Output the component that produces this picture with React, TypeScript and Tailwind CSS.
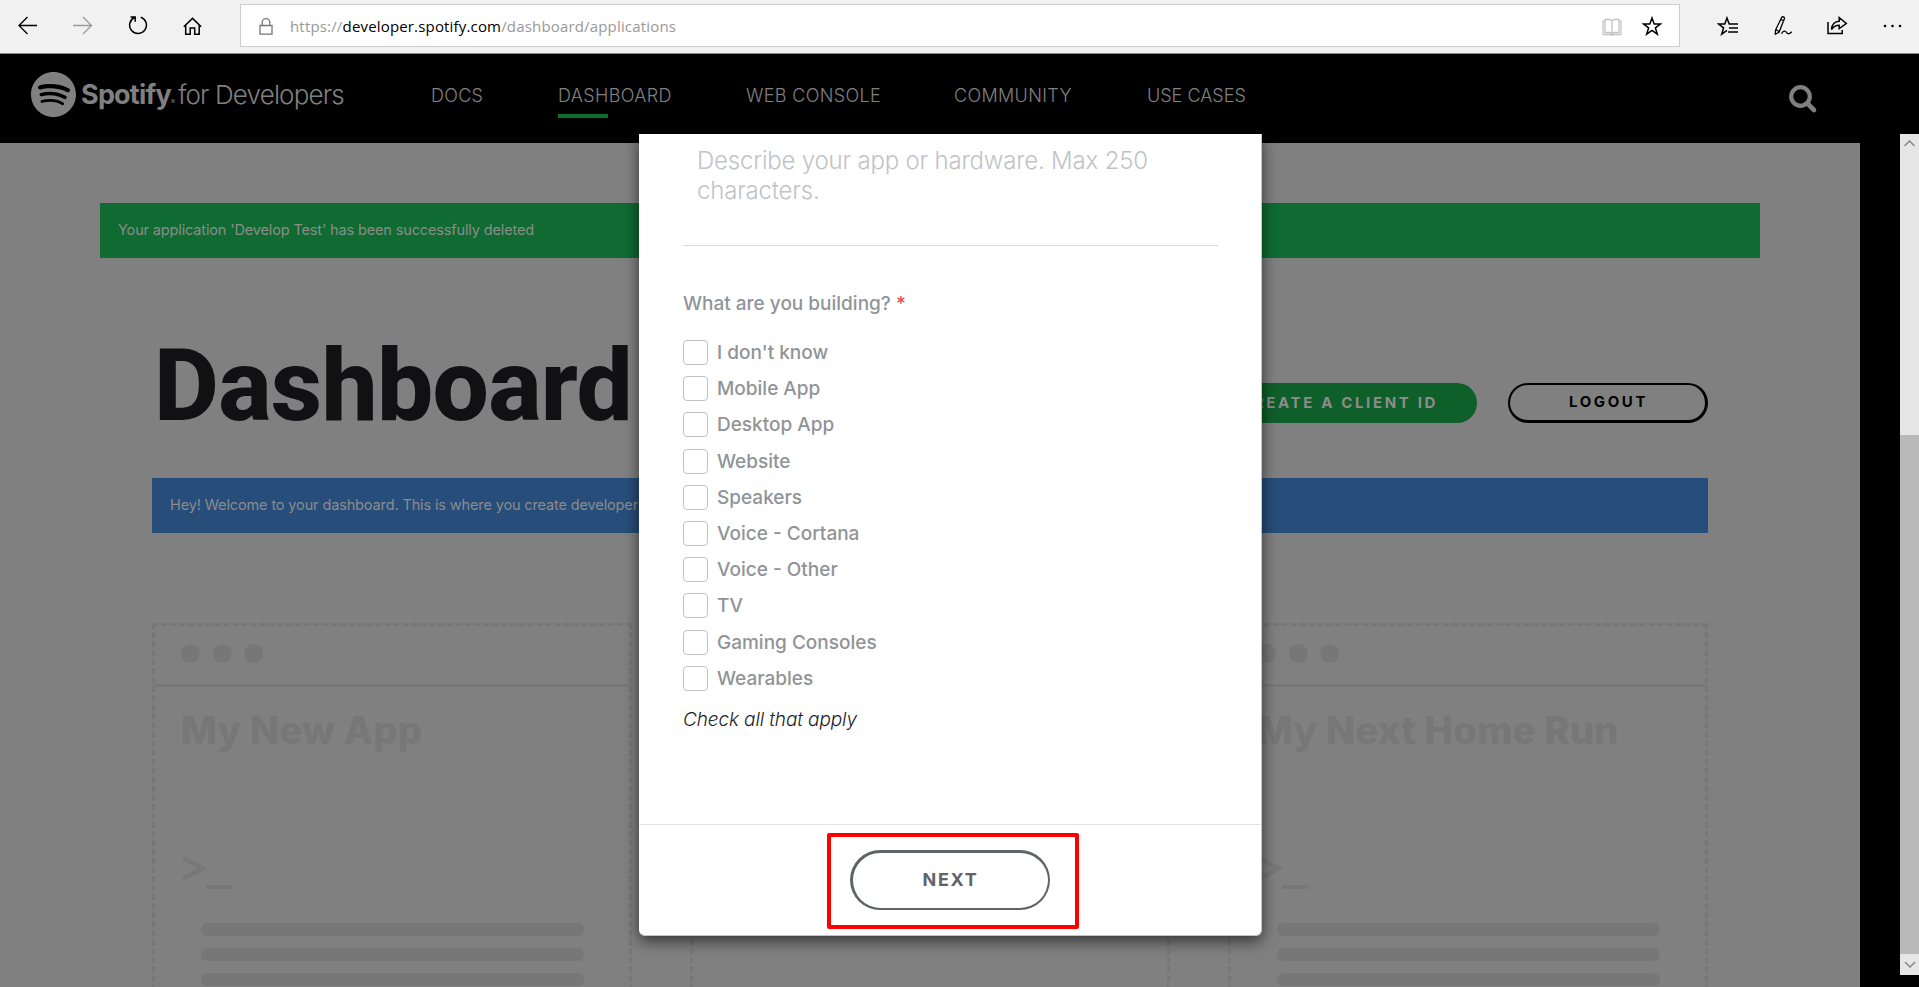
import type { ReactNode } from 'react';
import { SiSpotify } from 'react-icons/si';

const options = [
  "I don't know",
  'Mobile App',
  'Desktop App',
  'Website',
  'Speakers',
  'Voice - Cortana',
  'Voice - Other',
  'TV',
  'Gaming Consoles',
  'Wearables',
];

function Icon({ className, width, height, children }: { className: string; width: number; height: number; children: ReactNode }) {
  return (
    <svg
      className={`shrink-0 ${className}`}
      width={width}
      height={height}
      viewBox={`0 0 ${width} ${height}`}
      fill="none"
      stroke="currentColor"
      strokeWidth="1.3"
    >
      {children}
    </svg>
  );
}

function BrowserBar() {
  return (
    <div className="flex h-[54px] shrink-0 items-start border-b border-[#8a8a8a] bg-[#f1f1f1] text-black">
      <Icon className="mt-4 ml-[18px]" width={20} height={20}>
        <path d="M19 9.5H1M9.5 1 1 9.5 9.5 18" />
      </Icon>
      <Icon className="mt-4 ml-[35px] text-[#9a9a9a]" width={20} height={20}>
        <path d="M0 9.5h18.5M10 1l8.500 8.500L10 18" />
      </Icon>
      <Icon className="mt-[15px] ml-[35px]" width={20} height={20}>
        <path d="M12.800 2.200A8.400 8.400 0 1 1 6.500 2.500M2.500 2H7.200V6.800" strokeWidth="1.5" />
      </Icon>
      <Icon className="mt-[17px] ml-[35px]" width={19} height={19}>
        <path d="M.8 9.800 9.500 1.400l8.700 8.400M2.700 8.500V17.300H7.200V11H11.700V17.300H16.200V8.500" strokeWidth="1.5" />
      </Icon>
      <div className="mt-1 ml-[38px] flex h-[43px] w-[1440px] items-start border border-[#cdcdcd] bg-white">
        <Icon className="mt-[13px] ml-[18px] text-[#767676]" width={14} height={17}>
          <path d="M1 7.500H13V16.200H1ZM3.200 7.500V4.500a3.800 3.800 0 0 1 7.600 0V7.500" />
        </Icon>
        <p className="mt-[11px] ml-[17px] font-['Open_Sans',sans-serif] text-[15px] leading-5 tracking-[0.17px] text-[#999]">
          https://<span className="text-black">developer.spotify.com</span>/dashboard/applications
        </p>
        <div className="flex-1" />
        <Icon className="mt-[13px] text-[#c4c4c4]" width={20} height={18}>
          <path d="M3 1.500H8L10 2.800 12 1.500H17V14.500H12L10 15.800 8 14.500H3ZM10 2.800V15.800M3 3.200H1V16.500H8.500L10 17.200 11.500 16.500H19V3.200H17" />
        </Icon>
        <Icon className="mt-[11px] mr-[17px] ml-5" width={20} height={20}>
          <path d="M10 2l2.200 6h6.100l-4.900 3.800 1.900 6.400L10 14.400l-5.300 3.800 1.900-6.400L1.700 8h6.100z" strokeWidth="1.500" />
        </Icon>
      </div>
      <Icon className="mt-4 ml-[37px]" width={22} height={20}>
        <path d="M21 8H12.200L10 2 7.800 8H1.700l4.900 3.800-1.900 6.400L10 14.400M12 12h9M11 16h10" strokeWidth="1.500" />
      </Icon>
      <Icon className="mt-[15px] ml-[34px]" width={22} height={21}>
        <path d="M8.500 2.800C9.500 1 12 1.600 11.300 4L6 17.200 2.300 19.200 2.600 14.800ZM7.800 4.500 11 5.800M3 14.500l3.200 2.200M8.500 18.800c2-3.600 4-3 5.200-1.200s3 1.400 5-.8" />
      </Icon>
      <Icon className="mt-[15px] ml-[31px]" width={22} height={21}>
        <path d="M2 7V18.500H16.200V15M5.500 14.500C6 9 9 6.500 13.200 6.300V2.500L20.300 8.500 13.200 13.500V10.300C10 10.300 7.500 11.500 5.500 14.500Z" strokeWidth="1.500" />
      </Icon>
      <svg className="mt-[23px] ml-[34px] shrink-0" width="22" height="6" viewBox="0 0 22 6">
        <circle cx="3" cy="3" r="1.300" />
        <circle cx="10.500" cy="3" r="1.300" />
        <circle cx="18" cy="3" r="1.300" />
      </svg>
    </div>
  );
}

function SiteNav() {
  return (
    <nav className="flex h-[89px] shrink-0 items-start bg-black text-[#808080]">
      <SiSpotify className="mt-[18px] ml-[31px] size-[45px] shrink-0" />
      <div className="mt-[21px] ml-[5px] flex w-[272px] shrink-0 items-baseline leading-10 whitespace-nowrap">
        <span className="w-[90px] text-[27px] font-bold tracking-[-0.8px]">Spotify</span>
        <span className="w-[7px] text-[6px]">®</span>
        <span className="text-[26px] font-light tracking-[-0.85px]">for Developers</span>
      </div>
      <ul className="mt-[30px] ml-[78px] flex text-[18px] leading-[24px] font-light whitespace-nowrap">
        <li className="w-[127px] tracking-[0.3px]">DOCS</li>
        <li className="w-[188px] tracking-[0.35px]">
          DASHBOARD
          <div className="mt-[6px] h-1 w-[50px] bg-[#0f6d31]" />
        </li>
        <li className="w-[208px] tracking-[0.35px]">WEB CONSOLE</li>
        <li className="w-[193px] tracking-[0.35px]">COMMUNITY</li>
        <li>USE CASES</li>
      </ul>
      <div className="flex-1" />
      <svg className="mt-[30px] mr-[101px] shrink-0" width="30" height="30" viewBox="0 0 30 30" fill="none" stroke="currentColor">
        <circle cx="12.500" cy="12.500" r="9.300" strokeWidth="4.200" />
        <path d="M19.500 19.500 26 26" strokeWidth="4.600" strokeLinecap="round" />
      </svg>
    </nav>
  );
}

function AppCard({ title }: { title: string }) {
  return (
    <div className="h-[440px] w-[480px] shrink-0 border-[3px] border-dashed border-[#777]">
      <div className="flex h-[61px] items-center gap-[12.5px] border-b-[3px] border-[#777] pb-[3px] pl-[26px]">
        <span className="size-[19px] rounded-full bg-[#777]" />
        <span className="size-[19px] rounded-full bg-[#777]" />
        <span className="size-[19px] rounded-full bg-[#777]" />
      </div>
      <h2 className="mt-6 ml-[26px] text-[38px] leading-[38px] font-extrabold tracking-[0.3px] whitespace-nowrap text-[#777]">{title}</h2>
      <svg className="mt-[106px] ml-[27px]" width="52" height="36" viewBox="0 0 52 36" fill="none" stroke="#777" strokeWidth="4.500">
        <path d="M1 3 20.500 13.500 1 24" />
        <path d="M24 32H50" strokeWidth="4" />
      </svg>
      <div className="mt-8 mr-[45px] ml-[46px] flex flex-col gap-3">
        <div className="h-[13px] rounded-md bg-[#777]" />
        <div className="h-[13px] rounded-md bg-[#777]" />
        <div className="h-[13px] rounded-md bg-[#777]" />
      </div>
    </div>
  );
}

function Scrollbar() {
  return (
    <div className="absolute top-[134px] right-0 flex h-[841px] w-[19px] flex-col bg-[#e6e6e6] text-[#808080]">
      <Icon className="" width={19} height={19}>
        <path d="M4.500 12 9.500 7l5 5" />
      </Icon>
      <div className="mt-[282px] h-[519px] bg-[#b9b9b9]" />
      <Icon className="" width={19} height={19}>
        <path d="M5 8l5 5 5-5" />
      </Icon>
    </div>
  );
}

function Modal() {
  return (
    <div className="absolute top-[134px] left-[639px] flex h-[802px] w-[623px] flex-col rounded-b-md border-r border-b border-[#c4c4c4] bg-white shadow-[0_5px_15px_rgba(0,0,0,0.6)]">
      <div className="flex-1 pr-[43px] pl-11">
        <div className="h-[112px] border-b border-[#d9dadc] pt-3 pl-[14px] text-2xl leading-[30px] font-light tracking-[-0.19px] text-[#c1c3c6]">
          Describe your app or hardware. Max 250
          <br />
          characters.
        </div>
        <p className="mt-[46px] text-[19px] leading-[23px] font-medium text-[#919496]">
          What are you building? <span className="text-[#e0514f]">*</span>
        </p>
        <ul className="mt-[25px] flex flex-col gap-[11.2px]">
          {options.map((option) => (
            <li key={option} className="flex gap-[9px] text-[19px] leading-[25px] font-medium text-[#919496]">
              <span className="size-[25px] rounded-[4px] border border-[#c1c3c6] bg-white" />
              {option}
            </li>
          ))}
        </ul>
        <p className="mt-[17px] text-[19px] leading-[23px] font-light tracking-[-0.12px] text-[#222326] italic">Check all that apply</p>
      </div>
      <div className="relative flex h-[111px] justify-center border-t border-[#e5e5e5] pt-[25px]">
        <button className="h-[60px] w-[200px] rounded-full border-2 border-t-[3px] border-l-[3px] border-[#616467] pb-[2px] text-[18px] font-bold tracking-[1.7px] text-[#616467]">
          NEXT
        </button>
        <div className="absolute top-[8px] left-[188px] h-[96px] w-[252px] rounded-[2px] border-4 border-[#ff0000]" />
      </div>
    </div>
  );
}

export default function App() {
  return (
    <div className="relative flex h-[987px] w-[1919px] flex-col overflow-hidden bg-black font-['Inter',sans-serif]">
      <BrowserBar />
      <SiteNav />
      <main className="flex w-[1860px] flex-1 flex-col overflow-hidden bg-[#808080] pt-[60px]">
        <div className="mr-[100px] ml-[100px] flex h-[55px] shrink-0 items-center bg-[#0f6b31] pb-px pl-[18px] text-[14.5px] tracking-[-0.14px] text-[#8c8c8c]">
          Your application 'Develop Test' has been successfully deleted
        </div>
        <div className="mt-[77px] mr-[152px] ml-[154px] flex h-[98px] shrink-0 items-end">
          <h1 className="flex-1 pt-1 font-['Roboto',sans-serif] text-[100px] leading-[94px] font-extrabold tracking-[-0.7px] text-[#111113]">Dashboard</h1>
          <button className="mb-[10px] h-10 w-[276px] rounded-full bg-[#0f5f2b] text-[15px] font-bold tracking-[2.65px] text-[#8c8c8c]">
            CREATE A CLIENT ID
          </button>
          <button className="mb-[10px] ml-[31px] h-10 w-[200px] rounded-full border-2 border-r-[3px] border-b-[3px] border-black pl-[2px] text-[15px] font-bold tracking-[2.6px] text-black">
            LOGOUT
          </button>
        </div>
        <div className="mt-[45px] mr-[152px] ml-[152px] flex h-[55px] shrink-0 items-center bg-[#274d7a] pb-px pl-[18px] text-[14.5px] tracking-[-0.13px] whitespace-nowrap text-[#8c8c8c]">
          Hey! Welcome to your dashboard. This is where you create developer
        </div>
        <div className="mt-[90px] ml-[152px] flex shrink-0 gap-[58px]">
          <AppCard title="My New App" />
          <AppCard title="" />
          <AppCard title="My Next Home Run" />
        </div>
      </main>
      <Modal />
      <Scrollbar />
    </div>
  );
}
